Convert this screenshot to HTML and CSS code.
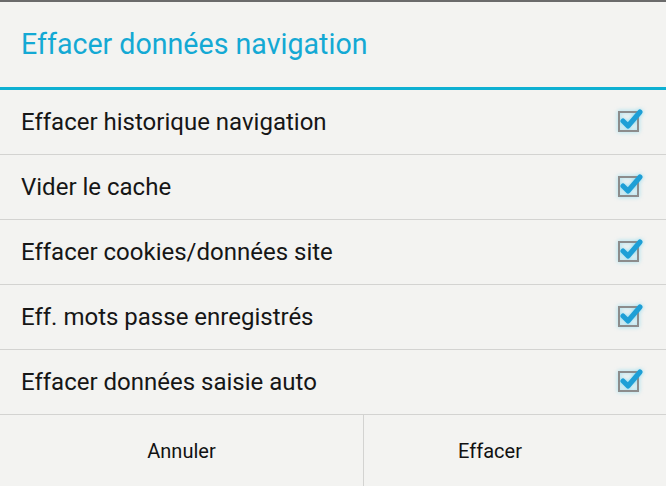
FILE: index.html
```html
<!DOCTYPE html>
<html lang="fr">
<head>
    <meta charset="UTF-8">
    <meta name="viewport" content="width=device-width, initial-scale=1.0">
    <title>Effacer données navigation</title>
    <link rel="stylesheet" href="styles.css">
</head>
<body>

<div class="dialog">
    <div class="dialog-title">Effacer données navigation</div>

    <ul class="options">
        <li class="option">
            <span>Effacer historique navigation</span>
            <span class="check"></span>
        </li>
        <li class="option">
            <span>Vider le cache</span>
            <span class="check"></span>
        </li>
        <li class="option">
            <span>Effacer cookies/données site</span>
            <span class="check"></span>
        </li>
        <li class="option">
            <span>Eff. mots passe enregistrés</span>
            <span class="check"></span>
        </li>
        <li class="option">
            <span>Effacer données saisie auto</span>
            <span class="check"></span>
        </li>
    </ul>

    <div class="buttons">
        <button class="btn">Annuler</button>
        <button class="btn btn-ok">Effacer</button>
    </div>
</div>

<template id="check-icon">
    <svg width="30" height="30" viewBox="0 0 30 30">
        <rect x="5" y="8" width="19" height="19" fill="none" stroke="#8c8c8c" stroke-width="2"/>
        <path d="M9 17 L14 22 L26 8" fill="none" stroke="#1e9fd6" stroke-width="5" stroke-linecap="round" stroke-linejoin="round"/>
    </svg>
</template>

<script>
    // cases cochées
    const icon = document.getElementById("check-icon");
    document.querySelectorAll(".check").forEach(c => {
        c.appendChild(icon.content.cloneNode(true));
    });
</script>

</body>
</html>
```

FILE: styles.css
```css
body {
    margin: 0;
    font-family: Roboto, "Liberation Sans", sans-serif;
    background-color: #f3f3f1;
}
.dialog {
    width: 666px;
    height: 486px;
    border-top: 2px solid #6b6b6b;
    box-sizing: border-box;
    background-color: #f3f3f1;
    display: flex;
    flex-direction: column;
}
.dialog-title {
    display: flex;
    align-items: center;
    padding-left: 21px;
    padding-bottom: 2px;
    font-size: 28.6px;
    color: #14a9d4;
    border-bottom: 3px solid #0eb0d2;
    box-sizing: border-box;
    height: 88px;
}
.options {
    list-style-type: none;
    margin: 0;
    padding: 0;
}
.option {
    height: 64px;
    border-bottom: 1px solid #d3d3d1;
    display: flex;
    align-items: center;
    justify-content: space-between;
    padding-left: 21px;
    padding-right: 22px;
    font-size: 24px;
    color: #161616;
}
.check {
    width: 30px;
    height: 30px;
    margin-top: -6px;
}
.check svg {
    display: block;
    filter: drop-shadow(0 0 2px rgba(60, 200, 240, 0.6));
}
.buttons {
    flex: 1;
    display: grid;
    grid-template-columns: 363px 1fr;
}
.btn {
    border: none;
    background: transparent;
    font-family: Roboto, "Liberation Sans", sans-serif;
    font-size: 20px;
    color: #111;
    padding: 0;
    margin: 0;
}
.btn-ok {
    border-left: 1px solid #d3d3d1;
    padding-right: 50px;
}
```
